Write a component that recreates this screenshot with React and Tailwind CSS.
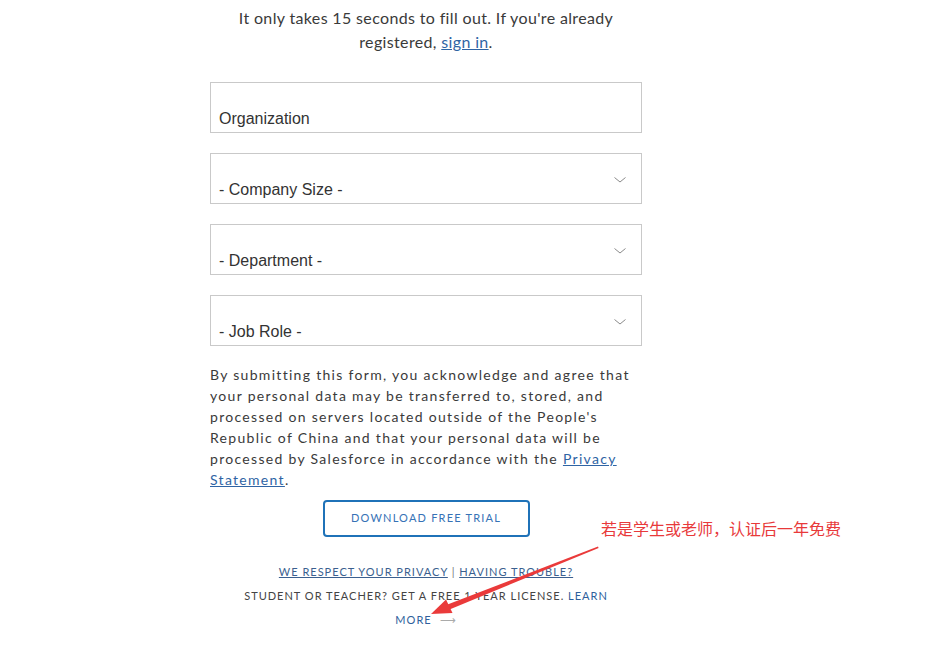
import React from 'react';

const Chevron = () => (
  <svg width="12" height="6" viewBox="0 0 12 6" className="absolute right-[15px] top-[23px]">
    <path d="M0.5 0.5 L6 5 L11.5 0.5" fill="none" stroke="#8a8a8a" strokeWidth="1" />
  </svg>
);

const Field = ({ label, select }) => (
  <div className="relative h-[51px] border border-[#c9c9c9] bg-white flex items-end pl-[8px] pb-[4px]">
    <span className="text-[16px] leading-[18px] text-[#333]" style={{ fontFamily: '"Liberation Sans", Arial, sans-serif' }}>
      {label}
    </span>
    {select && <Chevron />}
  </div>
);

const App = () => {
  return (
    <div className="relative w-[944px] h-[648px] overflow-hidden bg-white" style={{ fontFamily: 'Lato, "Open Sans", sans-serif' }}>
      <div className="ml-[210px] w-[432px]">
        {/* intro */}
        <p className="pt-[6px] text-center text-[16px] leading-[24px] text-[#3a3a3a] tracking-[0.35px]">
          It only takes 15 seconds to fill out. If you're already
          <br />
          registered, <a href="#" className="underline text-[#2f64a4]">sign in</a>.
        </p>

        {/* form fields */}
        <div className="mt-[28px] flex flex-col gap-[20px]">
          <Field label="Organization" />
          <Field label="- Company Size -" select />
          <Field label="- Department -" select />
          <Field label="- Job Role -" select />
        </div>

        {/* consent */}
        <p className="mt-[18px] text-[14px] leading-[21px] text-[#3a3a3a] tracking-[1.3px]">
          By submitting this form, you acknowledge and agree that your personal data may be transferred to, stored, and
          processed on servers located outside of the People's Republic of China and that your personal data will be
          processed by Salesforce in accordance with the{' '}
          <a href="#" className="underline text-[#2f64a4]">Privacy Statement</a>.
        </p>

        <div className="mt-[10px] flex justify-center">
          <button className="w-[207px] h-[37px] border-2 border-[#1f72b8] rounded-[4px] text-[11px] tracking-[1.2px] text-[#3672b6]">
            DOWNLOAD FREE TRIAL
          </button>
        </div>

        {/* footer links */}
        <div className="mt-[23px] text-center text-[11px] leading-[24px] tracking-[1px] text-[#444]">
          <div>
            <a href="#" className="underline text-[#3b5f8f]">WE RESPECT YOUR PRIVACY</a>
            <span className="text-[#777]"> | </span>
            <a href="#" className="underline text-[#3b5f8f]">HAVING TROUBLE?</a>
          </div>
          <div className="mx-[-20px]">
            STUDENT OR TEACHER? GET A FREE 1 YEAR LICENSE. <span className="text-[#2f5f9c]">LEARN</span>
          </div>
          <div>
            <span className="text-[#2f5f9c]">MORE</span>
            <span className="ml-[8px] text-[#aaa]">⟶</span>
          </div>
        </div>
      </div>

      {/* annotation */}
      <div
        className="absolute left-[601px] top-[517px] text-[16px] leading-[22px] text-[#e8393a]"
        style={{ fontFamily: '"Noto Sans CJK SC", sans-serif' }}
      >
        若是学生或老师，认证后一年免费
      </div>
      <svg className="absolute left-0 top-0 pointer-events-none" width="944" height="648">
        <polygon points="598,546.5 598.6,548 449.5,609.5 447.5,604.5" fill="#ea3a3a" />
        <polygon points="431,614 446,599.5 452.5,613" fill="#ea3a3a" />
      </svg>
    </div>
  );
};

export default App;
